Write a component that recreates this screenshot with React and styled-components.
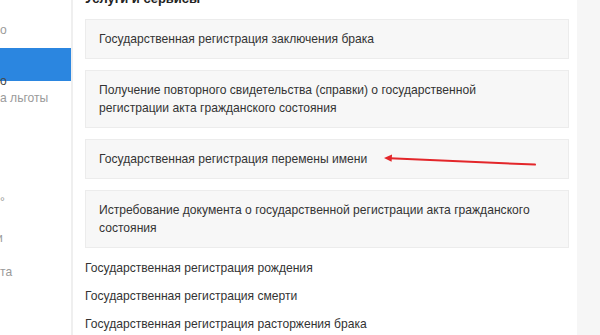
import React from "react";
import styled, { createGlobalStyle } from "styled-components";

const GlobalStyle = createGlobalStyle`
  html, body {
    margin: 0;
    padding: 0;
    background: #f6f6f6;
    font-family: "Liberation Sans", Arial, sans-serif;
    overflow: hidden;
  }
`;

const Page = styled.div`
  display: flex;
  width: 600px;
  height: 335px;
  overflow: hidden;
`;

const Sidebar = styled.div`
  width: 71px;
  flex-shrink: 0;
  background: #fff;
  border-right: 2px solid #efefef;
  display: flex;
  flex-direction: column;
  padding-top: 23px;
  overflow: hidden;
`;

const SideItem = styled.div`
  font-size: 12.1px;
  line-height: 14px;
  height: 14px;
  margin-top: ${(p) => p.mt || 0}px;
  margin-left: ${(p) => p.shift || 0}px;
  color: ${(p) => (p.dark ? "#444" : "#9a9a9a")};
  white-space: nowrap;
`;

const ActiveItem = styled.div`
  height: 33px;
  margin-top: 11px;
  background: #2b86e0;
`;

const Main = styled.div`
  width: 484px;
  flex-shrink: 0;
  background: #fff;
  padding: 0 8px 0 12px;
  display: flex;
  flex-direction: column;
`;

const Heading = styled.h3`
  margin: -10px 0 11px;
  font-size: 13px;
  line-height: 18px;
  font-weight: bold;
  color: #222;
`;

const ServiceList = styled.div`
  display: flex;
  flex-direction: column;
  gap: 11px;
`;

const ServiceBox = styled.div`
  position: relative;
  background: #f7f7f7;
  border: 1px solid #ececec;
  padding: 10px 20px 10px 13px;
  font-size: 12.1px;
  line-height: 18px;
  color: #333;
`;

const LinkList = styled.div`
  display: flex;
  flex-direction: column;
  gap: 10px;
  margin-top: 11px;
`;

const PlainLink = styled.div`
  font-size: 12.1px;
  line-height: 18px;
  color: #333;
`;

const Arrow = styled.svg`
  position: absolute;
  left: 290px;
  top: 10px;
  overflow: visible;
`;

const boxes = [
  { text: "Государственная регистрация заключения брака" },
  {
    text:
      "Получение повторного свидетельства (справки) о государственной регистрации акта гражданского состояния",
  },
  { text: "Государственная регистрация перемены имени", arrow: true },
  {
    text:
      "Истребование документа о государственной регистрации акта гражданского состояния",
  },
];

const links = [
  "Государственная регистрация рождения",
  "Государственная регистрация смерти",
  "Государственная регистрация расторжения брака",
];

export default function App() {
  return (
    <Page>
      <GlobalStyle />
      <Sidebar>
        <SideItem>о</SideItem>
        <ActiveItem />
        <SideItem dark mt={-7}>о</SideItem>
        <SideItem mt={3}>а льготы</SideItem>
        <SideItem mt={90}>°</SideItem>
        <SideItem mt={22} shift={-4}>и</SideItem>
        <SideItem mt={20}>та</SideItem>
      </Sidebar>
      <Main>
        <Heading>Услуги и сервисы</Heading>
        <ServiceList>
          {boxes.map((b) => (
            <ServiceBox key={b.text}>
              {b.text}
              {b.arrow && (
                <Arrow width="160" height="20" viewBox="0 0 160 20">
                  <line
                    x1="14"
                    y1="8.3"
                    x2="159"
                    y2="14.6"
                    stroke="#e3262a"
                    strokeWidth="2"
                    strokeLinecap="round"
                  />
                  <path d="M8 8.1 L16 4.6 L15.6 11.8 Z" fill="#e3262a" />
                </Arrow>
              )}
            </ServiceBox>
          ))}
        </ServiceList>
        <LinkList>
          {links.map((l) => (
            <PlainLink key={l}>{l}</PlainLink>
          ))}
        </LinkList>
      </Main>
    </Page>
  );
}
